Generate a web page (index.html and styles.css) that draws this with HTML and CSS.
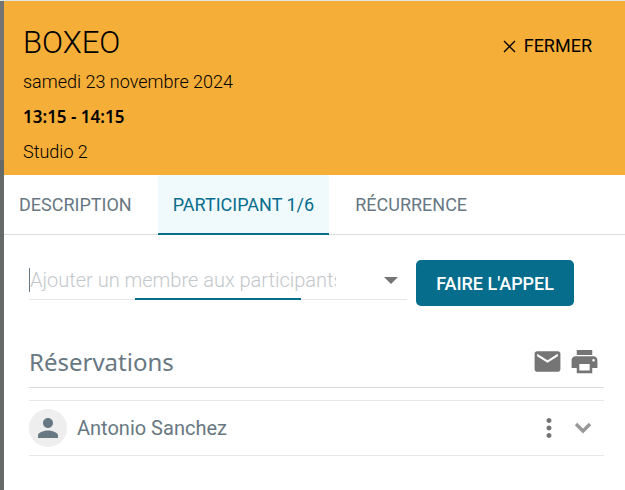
FILE: index.html
```
<!DOCTYPE html>
<html lang="fr">
<head>
    <meta charset="UTF-8">
    <title>BOXEO</title>
    <link rel="stylesheet" href="styles.css">
</head>
<body>
<div class="panel">
    <header class="header">
        <div class="infos">
            <h1>BOXEO</h1>
            <p>samedi 23 novembre 2024</p>
            <p class="hours">13:15 - 14:15</p>
            <p>Studio 2</p>
        </div>
        <button type="button" class="close">
            <svg width="13" height="13" viewBox="0 0 13 13"><path d="M1 1l11 11M12 1L1 12" fill="none" stroke="#000" stroke-width="1.3"/></svg>
            FERMER
        </button>
    </header>
    <nav class="tabs">
        <a href="#description">DESCRIPTION</a>
        <a href="#participant" class="now">PARTICIPANT 1/6</a>
        <a href="#recurrence">RÉCURRENCE</a>
    </nav>
    <main class="content">
        <div class="search">
            <div class="field">
                <input type="text" placeholder="Ajouter un membre aux participants" aria-label="Ajouter un membre aux participants">
                <svg class="arrow" width="14" height="7" viewBox="0 0 14 7"><path d="M0 0h14L7 7z" fill="#757575"/></svg>
            </div>
            <button type="button" class="appel">FAIRE L'APPEL</button>
        </div>
        <div class="title">
            <h2>Réservations</h2>
            <button type="button" class="icon" aria-label="Envoyer un mail">
                <svg width="31" height="31" viewBox="0 0 24 24"><path fill="#757575" d="M20 4H4c-1.100 0-2 .9-2 2v12c0 1.100.9 2 2 2h16c1.100 0 2-.9 2-2V6c0-1.100-.9-2-2-2zm0 4l-8 5-8-5V6l8 5 8-5v2z"/></svg>
            </button>
            <button type="button" class="icon" aria-label="Imprimer">
                <svg width="31" height="31" viewBox="0 0 24 24"><path fill="#757575" d="M19 8H5c-1.660 0-3 1.340-3 3v6h4v4h12v-4h4v-6c0-1.660-1.340-3-3-3zm-3 11H8v-5h8v5zm3-7c-.55 0-1-.45-1-1s.45-1 1-1 1 .45 1 1-.45 1-1 1zm-1-9H6v4h12V3z"/></svg>
            </button>
        </div>
        <ul class="members">
            <li>
                <span class="avatar">
                    <svg width="30" height="30" viewBox="0 0 24 24"><path fill="#687883" d="M12 12c2.210 0 4-1.790 4-4s-1.790-4-4-4-4 1.790-4 4 1.790 4 4 4zm0 2c-2.670 0-8 1.340-8 4v2h16v-2c0-2.660-5.330-4-8-4z"/></svg>
                </span>
                <span class="name">Antonio Sanchez</span>
                <button type="button" class="icon" aria-label="Options">
                    <svg width="30" height="30" viewBox="0 0 24 24"><path fill="#757575" d="M12 8c1.100 0 2-.9 2-2s-.9-2-2-2-2 .9-2 2 .9 2 2 2zm0 2c-1.100 0-2 .9-2 2s.9 2 2 2 2-.9 2-2-.9-2-2-2zm0 6c-1.100 0-2 .9-2 2s.9 2 2 2 2-.9 2-2-.9-2-2-2z"/></svg>
                </button>
                <button type="button" class="icon" aria-label="Détails">
                    <svg width="18" height="12" viewBox="0 0 18 12"><path d="M2 2l7 7 7-7" fill="none" stroke="#999" stroke-width="3.400"/></svg>
                </button>
            </li>
        </ul>
    </main>
</div>
</body>
</html>
```
FILE: styles.css
```
*{
    margin: 0;
    padding: 0;
    box-sizing: border-box;
}
body{
    background: linear-gradient(#747474 160px, #656a69 160px);
    border-top: 1px solid #e4e6e3;
    font-family: Roboto, "Liberation Sans", sans-serif;
    color: #687883;
}
button{
    border: 0;
    background: none;
    font-family: inherit;
    cursor: pointer;
}
svg{
    display: block;
}
.panel{
    margin-left: 4px;
    min-height: calc(100vh - 1px);
    background: #fff;
}
/* bandeau du cours */
.header{
    display: flex;
    justify-content: space-between;
    align-items: flex-start;
    padding: 20px 33px 6px 19px;
    background: #f5ae38;
    color: #000;
}
.header h1{
    font-size: 31px;
    line-height: 43px;
    font-weight: 300;
}
.header p{
    padding: 5px 0;
    font-size: 18px;
    line-height: 25px;
    font-weight: 300;
}
.header .hours{
    font-family: "Noto Sans", sans-serif;
    font-size: 17px;
    font-weight: 600;
}
.close{
    display: flex;
    align-items: center;
    gap: 8px;
    padding-top: 12px;
    font-size: 18px;
    line-height: 26px;
    font-weight: 400;
    color: #000;
}
/* onglets */
.tabs{
    display: flex;
    gap: 11px;
    height: 60px;
    border-bottom: 1px solid #dcdcdc;
}
.tabs a{
    height: 60px;
    padding: 0 15px;
    font-size: 18px;
    line-height: 60px;
    color: #687883;
    text-decoration: none;
    white-space: nowrap;
}
.tabs a.now{
    border-bottom: 2px solid #076d8d;
    border-radius: 4px 4px 0 0;
    background: #f0fafc;
    color: #076d8d;
}
.content{
    padding: 25px 21px 25px 25px;
}
/* recherche d'un membre */
.search{
    display: flex;
    align-items: flex-start;
    gap: 9px;
    padding-right: 30px;
}
/* trait gris sous le champ, trait bleu au centre */
.field{
    display: flex;
    flex: 1;
    align-items: center;
    justify-content: space-between;
    height: 40px;
    min-width: 0;
    padding-right: 9px;
    background:
        linear-gradient(#076d8d, #076d8d) 50% 100% / 44% 2px no-repeat,
        linear-gradient(#e6e6e6, #e6e6e6) 0 100% / 100% 1px no-repeat;
}
.field input{
    flex: 1;
    min-width: 0;
    height: 24px;
    margin-right: 48px;
    border: 0;
    border-left: 1px solid #687883;
    outline: 0;
    background: none;
    font-family: inherit;
    font-size: 20px;
    font-weight: 300;
    color: #687883;
}
.field input::placeholder{
    color: #c3c8cc;
}
.appel{
    height: 46px;
    padding: 0 20px;
    border-radius: 5px;
    background: #076d8d;
    font-size: 18px;
    font-weight: 500;
    color: #fff;
    white-space: nowrap;
}
/* liste des reservations */
.title{
    display: flex;
    align-items: center;
    gap: 6px;
    margin-top: 35px;
    padding: 0 4px 5px 0;
    border-bottom: 1px solid #dcdcdc;
}
.title h2{
    flex: 1;
    font-family: "Noto Sans", sans-serif;
    font-size: 24px;
    line-height: 41px;
    font-weight: 400;
}
.members{
    margin-top: 12px;
    border-top: 1px solid #e8e8e8;
    list-style: none;
}
.members li{
    display: flex;
    align-items: center;
    height: 55px;
    padding-right: 12px;
    border-bottom: 1px solid #e8e8e8;
}
.avatar{
    display: flex;
    align-items: center;
    justify-content: center;
    width: 38px;
    height: 38px;
    border-radius: 50%;
    background: #eee;
}
.name{
    flex: 1;
    padding-left: 10px;
    font-size: 20px;
}
.members .icon{
    margin-left: 10px;
}
```
